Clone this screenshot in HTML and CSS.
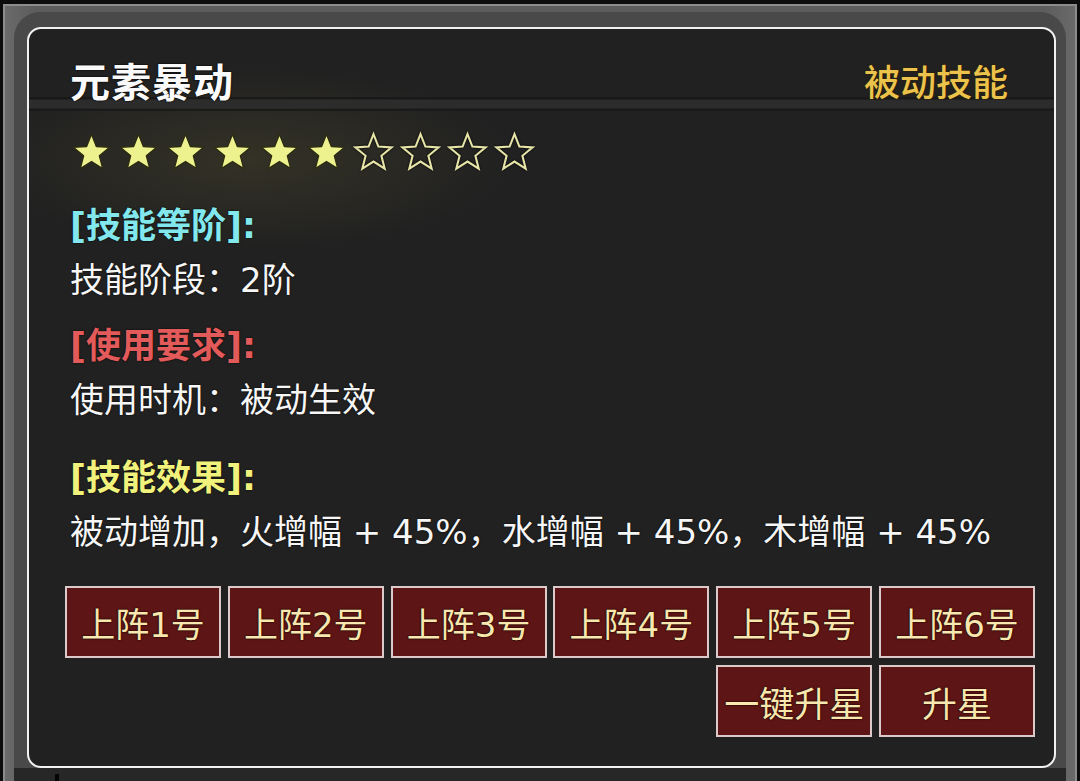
FILE: index.html
```html
<!DOCTYPE html>
<html lang="zh">
<head>
<meta charset="utf-8">
<title>元素暴动</title>
<link rel="stylesheet" href="styles.css">
</head>
<body>
<div class="screen">
  <div class="frame">
    <div class="bezel">
      <div class="panel">
        <div class="header">
          <div class="title">元素暴动</div>
          <div class="kind">被动技能</div>
        </div>
        <div class="stars">
          <svg class="star on" viewBox="1.4 1.4 21.2 20.2"><path d="M12 1.5L14.82 8.62L22.46 9.1L16.56 13.98L18.47 21.4L12 17.3L5.53 21.4L7.44 13.98L1.54 9.1L9.18 8.62Z"/></svg>
          <svg class="star on" viewBox="1.4 1.4 21.2 20.2"><path d="M12 1.5L14.82 8.62L22.46 9.1L16.56 13.98L18.47 21.4L12 17.3L5.53 21.4L7.44 13.98L1.54 9.1L9.18 8.62Z"/></svg>
          <svg class="star on" viewBox="1.4 1.4 21.2 20.2"><path d="M12 1.5L14.82 8.62L22.46 9.1L16.56 13.98L18.47 21.4L12 17.3L5.53 21.4L7.44 13.98L1.54 9.1L9.18 8.62Z"/></svg>
          <svg class="star on" viewBox="1.4 1.4 21.2 20.2"><path d="M12 1.5L14.82 8.62L22.46 9.1L16.56 13.98L18.47 21.4L12 17.3L5.53 21.4L7.44 13.98L1.54 9.1L9.18 8.62Z"/></svg>
          <svg class="star on" viewBox="1.4 1.4 21.2 20.2"><path d="M12 1.5L14.82 8.62L22.46 9.1L16.56 13.98L18.47 21.4L12 17.3L5.53 21.4L7.44 13.98L1.54 9.1L9.18 8.62Z"/></svg>
          <svg class="star on" viewBox="1.4 1.4 21.2 20.2"><path d="M12 1.5L14.82 8.62L22.46 9.1L16.56 13.98L18.47 21.4L12 17.3L5.53 21.4L7.44 13.98L1.54 9.1L9.18 8.62Z"/></svg>
          <svg class="star off" viewBox="1.4 1.4 21.2 20.2"><path d="M12 1.5L14.82 8.62L22.46 9.1L16.56 13.98L18.47 21.4L12 17.3L5.53 21.4L7.44 13.98L1.54 9.1L9.18 8.62Z"/></svg>
          <svg class="star off" viewBox="1.4 1.4 21.2 20.2"><path d="M12 1.5L14.82 8.62L22.46 9.1L16.56 13.98L18.47 21.4L12 17.3L5.53 21.4L7.44 13.98L1.54 9.1L9.18 8.62Z"/></svg>
          <svg class="star off" viewBox="1.4 1.4 21.2 20.2"><path d="M12 1.5L14.82 8.62L22.46 9.1L16.56 13.98L18.47 21.4L12 17.3L5.53 21.4L7.44 13.98L1.54 9.1L9.18 8.62Z"/></svg>
          <svg class="star off" viewBox="1.4 1.4 21.2 20.2"><path d="M12 1.5L14.82 8.62L22.46 9.1L16.56 13.98L18.47 21.4L12 17.3L5.53 21.4L7.44 13.98L1.54 9.1L9.18 8.62Z"/></svg>
        </div>
        <div class="section s1">
          <div class="label cyan">[技能等阶]:</div>
          <div class="line">技能阶段：2阶</div>
        </div>
        <div class="section s2">
          <div class="label red">[使用要求]:</div>
          <div class="line">使用时机：被动生效</div>
        </div>
        <div class="section s3">
          <div class="label yellow">[技能效果]:</div>
          <div class="line">被动增加，火增幅 + 45%，水增幅 + 45%，木增幅 + 45%</div>
        </div>
        <div class="buttons">
          <div class="btn">上阵1号</div>
          <div class="btn">上阵2号</div>
          <div class="btn">上阵3号</div>
          <div class="btn">上阵4号</div>
          <div class="btn">上阵5号</div>
          <div class="btn">上阵6号</div>
          <div class="btn c5">一键升星</div>
          <div class="btn c6">升星</div>
        </div>
      </div>
      <div class="under">
        <div class="under-line"></div>
      </div>
    </div>
  </div>
</div>
</body>
</html>
```
FILE: styles.css
```css
* { box-sizing: border-box; }
html, body { margin: 0; padding: 0; }
body {
  background: #0c0c0c;
  font-family: "DejaVu Sans", "Noto Sans CJK SC", sans-serif;
  color: #f4f4f4;
}
.screen {
  width: 1080px;
  height: 781px;
  overflow: hidden;
}
.frame {
  margin: 4px 3px 0 3px;
  border: 2px solid #8c8c8c;
  border-bottom: none;
  background: linear-gradient(to right, #6a6a6a, #5c5c5c 3%, #5c5c5c 97%, #6a6a6a);
  padding: 6px 9px 0 9px;
  height: 790px;
}
.bezel {
  background: #494949;
  border-radius: 26px 26px 0 0;
  padding: 15px 10px 0 13px;
  height: 790px;
}
.panel {
  height: 741px;
  border: 2px solid #f2f2f2;
  border-radius: 14px;
  background:
    radial-gradient(ellipse 260px 90px at 220px 130px, rgba(92, 86, 48, 0.32), rgba(92, 86, 48, 0) 100%),
    #212121;
  padding: 0 18px 0 38px;
}
.header {
  display: flex;
  justify-content: space-between;
  align-items: flex-end;
  margin: 0 -18px 0 -38px;
  padding: 0 46px 8px 41px;
  height: 83px;
  font-family: "Noto Sans CJK SC", sans-serif;
  background:
    linear-gradient(#191919, #191919) left 0 bottom 13px / 100% 2px no-repeat,
    linear-gradient(#2c2c2c, #2c2c2c) left 0 bottom 4px / 100% 8px no-repeat,
    linear-gradient(#1a1a1a, #1a1a1a) left 0 bottom 1px / 100% 2px no-repeat;
}
.title {
  font-size: 40px;
  line-height: 47px;
  font-weight: 700;
  color: #fafafa;
  text-shadow: 0 0 2px #000, 0 0 1px #000;
  letter-spacing: 1px;
}
.kind {
  font-size: 36px;
  line-height: 47px;
  font-weight: 500;
  color: #ebc24c;
  text-shadow: 0 0 2px #3a2a00, 0 0 1px #000;
}
.stars {
  display: flex;
  gap: 10px;
  margin-top: 22px;
  margin-left: 6px;
  height: 35px;
}
.star {
  width: 37px;
  height: 35px;
  overflow: visible;
}
.star.on path {
  fill: #eef28e;
  stroke: #2c2c12;
  stroke-width: 0.8;
  stroke-linejoin: round;
}
.star.off path {
  fill: none;
  stroke: #e6e4a6;
  stroke-width: 1.2;
  stroke-linejoin: miter;
}
.star.off {
  filter: drop-shadow(0 0 1px #000);
}
.section {
  margin-left: 3px;
  font-size: 35px;
  line-height: 54px;
}
.s1 { margin-top: 30px; }
.s2 { margin-top: 12px; }
.s3 { margin-top: 24px; }
.label {
  font-weight: 700;
  text-shadow: 0 0 2px #000;
}
.cyan { color: #82e8ee; }
.red { color: #e25a5a; }
.yellow { color: #f1f27c; }
.line {
  color: #f6f6f6;
  font-size: 34px;
  text-shadow: 0 0 2px #000;
}
.buttons {
  display: grid;
  grid-template-columns: repeat(6, 156px);
  grid-auto-rows: 72px;
  gap: 7px 6.8px;
  margin-top: 27px;
  margin-left: -2px;
}
.btn {
  background: #5d1515;
  border: 2px solid #dccaca;
  color: #f8e7ae;
  font-size: 34px;
  display: flex;
  align-items: center;
  justify-content: center;
  text-shadow: 0 0 2px #1c0000, 0 0 1px #000;
  white-space: nowrap;
}
.c5 { grid-column: 5; font-size: 35px; }
.c6 { grid-column: 6; font-size: 35px; }
.under {
  height: 20px;
  margin: 0 -10px 0 -13px;
  background: #272727;
  position: relative;
}
.under-line {
  position: absolute;
  left: 41px;
  top: 6px;
  width: 4px;
  height: 20px;
  background: #050505;
}
```
